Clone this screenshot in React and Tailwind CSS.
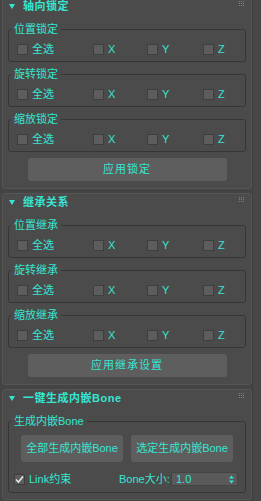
import React from 'react';

const font = { fontFamily: '"Liberation Sans", "Noto Sans CJK SC", sans-serif' };

const Grip = () => (
  <svg width="6" height="6" viewBox="0 0 6 6" className="text-[#3f9d92]">
    {[0, 2, 4].map((y) =>
      [0, 2, 4].map((x) => <rect key={`${x}-${y}`} x={x} y={y} width="1" height="1" fill="currentColor" />)
    )}
  </svg>
);

const Check = ({ label, checked }) => (
  <label className="flex items-center gap-[4px] h-[12px] whitespace-nowrap">
    <span className="w-[11px] h-[11px] bg-[#5d5d5d] border border-[#3e3e3e] flex items-center justify-center shrink-0">
      {checked && (
        <svg width="9" height="9" viewBox="0 0 9 9">
          <path d="M1 4.5 L3.5 7 L8 1.5" stroke="#e8e8e8" strokeWidth="1.6" fill="none" />
        </svg>
      )}
    </span>
    <span className="text-[11px] leading-[12px] text-[#35e6d2]">{label}</span>
  </label>
);

const Group = ({ title, children, className = '' }) => (
  <fieldset className={`mx-[5px] px-[2px] pb-[6px] border border-[#363636] rounded-[3px] ${className}`}>
    <legend className="px-[3px] text-[11px] leading-[12px] text-[#35e6d2]">{title}</legend>
    <div className="pt-[8px]">{children}</div>
  </fieldset>
);

const AxisRow = () => (
  <div className="grid grid-cols-[76px_54px_56px_1fr] pl-[6px]">
    <Check label="全选" />
    <Check label="X" />
    <Check label="Y" />
    <Check label="Z" />
  </div>
);

const Panel = ({ title, children, className = '' }) => (
  <section className={`bg-[#4b4b4b] border border-[#555555] rounded-[3px] ${className}`}>
    <div className="h-[17px] flex items-center pl-[6px] pr-[6px]">
      <svg width="6" height="5" viewBox="0 0 6 5" className="mr-[8px]">
        <path d="M0 0 H6 L3 5 Z" fill="#35e6d2" />
      </svg>
      <span className="text-[11px] font-bold tracking-[0.5px] text-[#35e6d2]">{title}</span>
      <span className="ml-auto -mt-[6px]"><Grip /></span>
    </div>
    {children}
  </section>
);

const Btn = ({ children, className = '' }) => (
  <button className={`bg-[#5e5e5e] rounded-[3px] text-[11px] tracking-[1px] text-[#35e6d2] whitespace-nowrap ${className}`}>
    {children}
  </button>
);

const AxisPanel = ({ title, groups, action, className }) => (
  <Panel title={title} className={className}>
    <div className="mt-[8px] flex flex-col gap-[6px]">
      {groups.map((g) => (
        <Group key={g} title={g}>
          <AxisRow />
        </Group>
      ))}
    </div>
    <div className="flex justify-center mt-[6px] pb-[7px]">
      <Btn className="w-[199px] h-[23px]">{action}</Btn>
    </div>
  </Panel>
);

export default function App() {
  return (
    <div className="w-[261px] h-[501px] overflow-hidden bg-[#444444] flex" style={font}>
      <div className="w-[252px] pl-[2px] -mt-[3px] flex flex-col gap-[4px]">
        <AxisPanel title="轴向锁定" groups={['位置锁定', '旋转锁定', '缩放锁定']} action="应用锁定" />
        <AxisPanel title="继承关系" groups={['位置继承', '旋转继承', '缩放继承']} action="应用继承设置" />

        <Panel title="一键生成内嵌Bone">
          <Group title="生成内嵌Bone" className="mt-[8px]">
            <div className="flex gap-[8px] pl-[10px]">
              <Btn className="w-[102px] h-[27px] tracking-normal">全部生成内嵌Bone</Btn>
              <Btn className="w-[102px] h-[27px] tracking-normal">选定生成内嵌Bone</Btn>
            </div>
            <div className="flex items-center mt-[10px] pl-[3px] h-[14px]">
              <div className="w-[105px]">
                <Check label="Link约束" checked />
              </div>
              <span className="w-[52px] whitespace-nowrap text-[11px] text-[#35e6d2]">Bone大小:</span>
              <div className="w-[67px] h-[14px] bg-[#5a5a5a] border border-[#444] flex items-center pl-[4px] pr-[3px]">
                <span className="text-[11px] text-[#35e6d2]">1.0</span>
                <svg width="5" height="9" viewBox="0 0 5 9" className="ml-auto">
                  <path d="M0 3.5 L2.5 0.5 L5 3.5 Z M0 5.5 L2.5 8.5 L5 5.5 Z" fill="#35e6d2" />
                </svg>
              </div>
            </div>
          </Group>
          <div className="h-[6px]" />
        </Panel>
      </div>
      <div className="flex-1 bg-[#474747] border-l border-[#3f3f3f]" />
    </div>
  );
}
